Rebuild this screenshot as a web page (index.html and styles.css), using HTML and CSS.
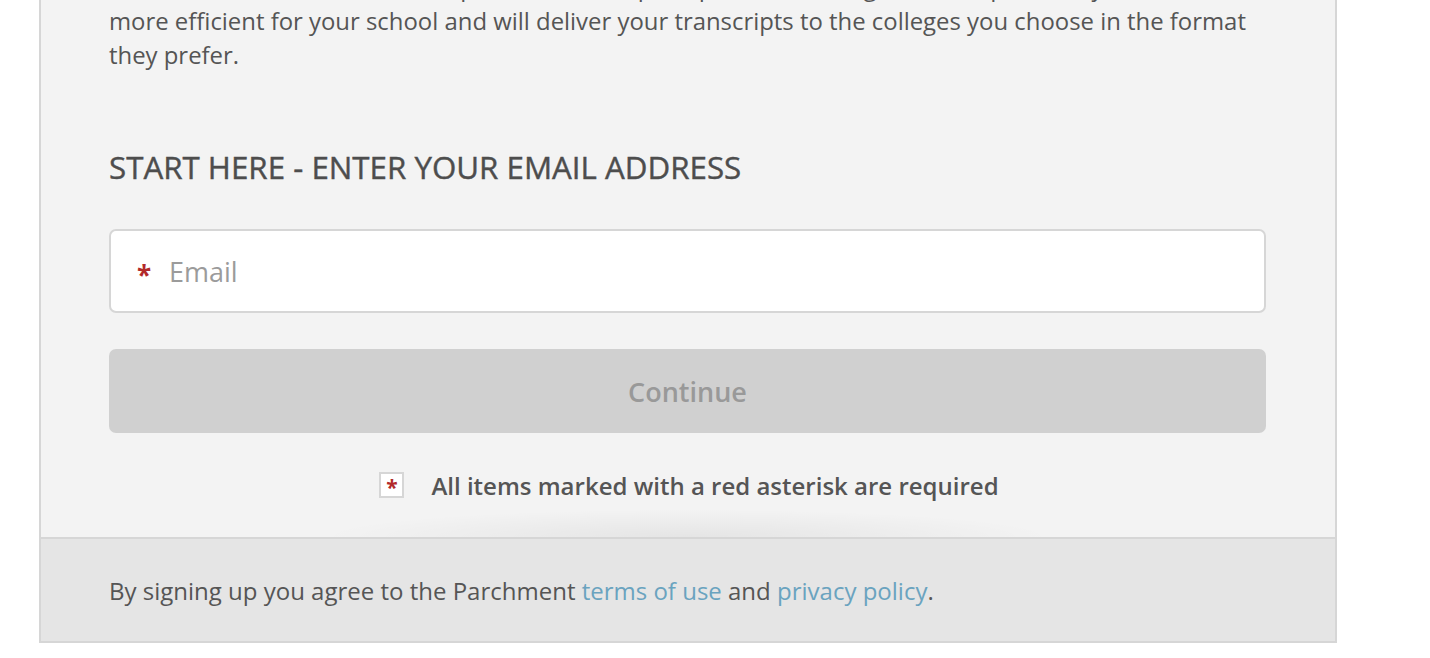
FILE: index.html
```html
<!DOCTYPE html>
<html lang="en">
<head>
<meta charset="utf-8">
<title>Parchment - Sign up</title>
<link rel="stylesheet" href="styles.css">
</head>
<body>
<div class="panel">
  <div class="panel-body">
    <p class="intro">Your school uses Parchment to process transcript requests. Ordering online is quick, easy, and<br>more efficient for your school and will deliver your transcripts to the colleges you choose in the format they prefer.</p>
    <h2 class="heading">START HERE - ENTER YOUR EMAIL ADDRESS</h2>
    <label class="field">
      <span class="req">*</span>
      <input class="field-input" type="email" placeholder="Email">
    </label>
    <button class="btn" type="button" disabled>Continue</button>
    <div class="required-note">
      <span class="req-box">*</span>
      <span class="required-text">All items marked with a red asterisk are required</span>
    </div>
  </div>
  <div class="panel-footer">
    <p class="terms">By signing up you agree to the Parchment <a href="#">terms of use</a> and <a href="#">privacy policy</a>.</p>
  </div>
</div>
</body>
</html>
```
FILE: styles.css
```css
html, body {
  margin: 0;
  padding: 0;
  background: #ffffff;
  font-family: "Open Sans", "Liberation Sans", sans-serif;
  color: #555555;
  overflow: hidden;
}

.panel {
  margin: -40px 0 0 39px;
  width: 1294px;
  border: 2px solid #d6d6d6;
  background: #f3f3f3;
}

.panel-body {
  padding: 8px 69px 0 68px;
}

.intro {
  margin: 0;
  font-size: 23.9px;
  line-height: 34px;
  color: #555555;
}

.heading {
  margin: 75px 0 0;
  font-size: 31.3px;
  line-height: 40px;
  font-weight: 400;
  color: #4d4d4d;
  -webkit-text-stroke: 0.4px #4d4d4d;
}

.field {
  margin-top: 42px;
  display: flex;
  align-items: center;
  height: 80px;
  background: #ffffff;
  border: 2px solid #d6d6d6;
  border-radius: 7px;
  padding: 0 0 0 26px;
}

.req {
  color: #b22a2a;
  font-size: 26px;
  font-weight: 700;
  line-height: 1;
  margin-top: 8px;
  width: 32px;
  flex: none;
}

.field-input {
  flex: 1;
  border: 0;
  outline: 0;
  background: transparent;
  font-family: inherit;
  font-size: 27px;
  color: #555555;
  padding: 0;
  height: 100%;
}

.field-input::placeholder {
  color: #9b9b9b;
}

.btn {
  display: block;
  width: 100%;
  margin-top: 36px;
  height: 84px;
  border: 0;
  border-radius: 7px;
  background: #d0d0d0;
  color: #999999;
  font-family: inherit;
  font-size: 27px;
  font-weight: 600;
  padding: 0;
}

.required-note {
  display: flex;
  align-items: center;
  justify-content: center;
  gap: 27px;
  height: 104px;
  padding-left: 3px;
  position: relative;
}

.required-note::after {
  content: "";
  position: absolute;
  left: 18%;
  right: 18%;
  bottom: 0;
  height: 28px;
  background: radial-gradient(ellipse at 50% 100%, rgba(0, 0, 0, 0.06) 0%, rgba(0, 0, 0, 0) 70%);
  pointer-events: none;
}

.req-box {
  display: flex;
  align-items: center;
  justify-content: center;
  box-sizing: border-box;
  width: 25px;
  height: 26px;
  border: 2px solid #d6d6d6;
  background: #ffffff;
  color: #b22a2a;
  font-size: 21px;
  font-weight: 700;
  line-height: 1;
  padding-top: 5px;
}

.required-text {
  font-size: 24px;
  font-weight: 600;
  color: #555555;
}

.panel-footer {
  border-top: 2px solid #d6d6d6;
  background: #e5e5e5;
  padding: 0 68px;
  height: 102px;
  display: flex;
  align-items: center;
}

.terms {
  margin: 0;
  font-size: 24px;
  color: #555555;
}

.terms a {
  color: #6aa3bf;
  text-decoration: none;
}
```
